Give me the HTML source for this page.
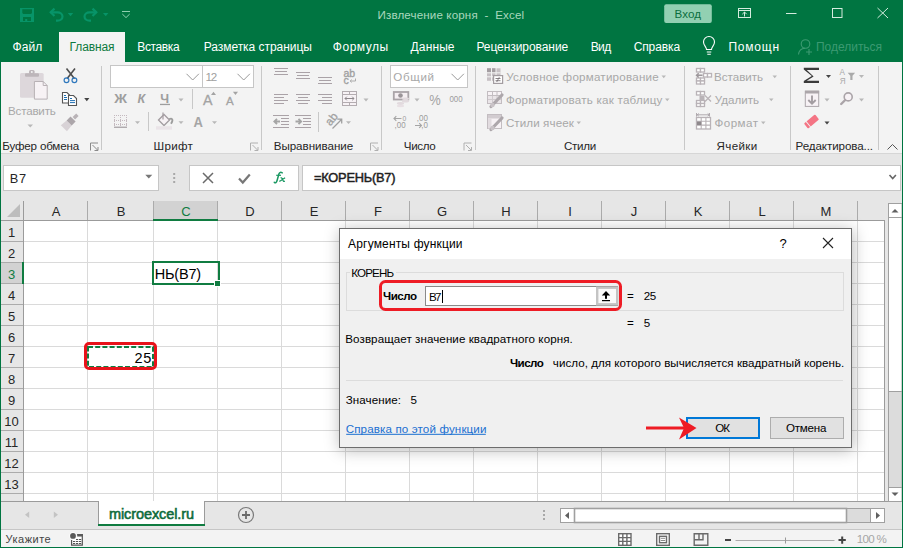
<!DOCTYPE html>
<html><head><meta charset="utf-8">
<style>
*{box-sizing:border-box;margin:0;padding:0}
html,body{width:903px;height:548px;overflow:hidden;background:#f3f3f3;font-family:"Liberation Sans",sans-serif;color:#262626}
.a{position:absolute}
.t{position:absolute;white-space:nowrap;line-height:1}
svg{position:absolute;overflow:visible}
.g{position:absolute;background:#dadada}
</style></head><body>
<div class="a" style="left:0;top:0;width:903px;height:62px;background:#007541"></div>
<div class="a" style="left:59px;top:32px;width:66px;height:30px;background:#f3f3f3"></div>
<div class="a" style="left:0;top:62px;width:903px;height:92px;background:#f3f3f3;border-bottom:1px solid #d6d6d6"></div>
<div class="a" style="left:0;top:154px;width:903px;height:47px;background:#e6e6e6"></div>
<svg style="left:0;top:0" width="903" height="62">
<g fill="#079468">
<path d="M20 8h14v14h-14z M22.3 9.3h9.7v3.8l-1 1h-7.7l-1-1z M23 17h8v4h-8z M25.2 19h2v2h-2z" fill-rule="evenodd"/>
<polygon points="67.8,13 73.2,13 70.5,16.3"/>
<polygon points="103,13 108.4,13 105.7,16.3"/>
</g>
<g fill="none" stroke="#079468" stroke-width="2.2">
<path d="M50.5 12.3h7a5 4.2 0 0 1 0 8.4h-1.5"/>
<path d="M54.5 8.6l-3.8 3.7 3.8 3.7"/>
<path d="M96.5 12.3h-7a5 4.2 0 0 0 0 8.4h1.5"/>
<path d="M92.5 8.6l3.8 3.7-3.8 3.7"/>
</g>
<g fill="none" stroke="#8fcfb0" stroke-width="1">
<path d="M122 11.5h8M122.3 14l3.7 3.6 3.7-3.6"/>
</g>
<!-- window controls -->
<rect x="664.2" y="4.2" width="47.6" height="18.8" rx="2" fill="#92d0b2"/>
<g fill="none" stroke="#d4ebde" stroke-width="1">
<rect x="738.5" y="8.5" width="12" height="9"/>
<path d="M738.5 10.5h12M744.5 16.5v-4.5M742.3 14.2l2.2-2.2 2.2 2.2"/>
<path d="M786 13.5h10.5"/>
<rect x="832.5" y="8.5" width="9.5" height="9"/>
<path d="M877.5 8l10.5 10M888 8l-10.5 10"/>
</g>
</svg>
<!-- tabs -->
<svg style="left:0;top:0" width="903" height="62">
<g fill="none" stroke="#fff" stroke-width="1.1">
<path d="M706.5 49.5c0-2.5-3-4-3-7.5a5.5 5.5 0 0 1 11 0c0 3.5-3 5-3 7.5z"/>
<path d="M706.8 52h4.5M707.3 54.2h3.5"/>
</g>
<g fill="none" stroke="#3c9a72" stroke-width="1.1">
<circle cx="805.5" cy="44" r="4.3"/>
<path d="M798.5 54.5c0.5-4 3-6 6.5-6.2M809 49v6M806 52h6"/>
</g>
</svg>
<svg style="left:0;top:0" width="903" height="160">
<!-- separators -->
<g fill="#c8c8c8">
<rect x="101" y="66" width="1" height="84"/>
<rect x="261" y="66" width="1" height="84"/>
<rect x="381" y="66" width="1" height="84"/>
<rect x="475" y="66" width="1" height="84"/>
<rect x="684" y="66" width="1" height="84"/>
<rect x="790" y="66" width="1" height="84"/>
<rect x="878" y="66" width="1" height="84"/>
<rect x="192" y="89" width="1" height="20"/>
<rect x="148" y="112" width="1" height="19"/>
<rect x="318" y="112" width="1" height="20"/>
</g>
<!-- clipboard -->
<rect x="20" y="73" width="23.7" height="24.7" rx="1.5" fill="#ddd7db"/>
<rect x="25" y="73.3" width="14" height="3.4" rx="1" fill="#bdb6ba"/>
<rect x="29" y="70" width="5.6" height="4" rx="1.5" fill="#bdb6ba"/>
<circle cx="31.8" cy="72" r="1" fill="#f3f3f3"/>
<path d="M34.4 81.5h8.8l4 4v13.6h-12.8z" fill="#f7f2f5" stroke="#b8b1b5" stroke-width="1"/>
<path d="M43.2 81.5v4h4" fill="none" stroke="#b8b1b5" stroke-width="1"/>
<polygon points="27.5,124.5 33,124.5 30.25,127.5" fill="#b8b8b8"/>
<!-- scissors -->
<path d="M66.5 68.5l8 10.2M75 68.5l-8 10.2" stroke="#4e4e4e" stroke-width="1.6" fill="none"/>
<circle cx="66.5" cy="80.3" r="2.4" fill="none" stroke="#2f78bd" stroke-width="1.2"/>
<circle cx="74.4" cy="80.3" r="2.4" fill="none" stroke="#2f78bd" stroke-width="1.2"/>
<!-- copy -->
<path d="M62.5 92.5h4.5l2.5 2.5v8h-7z" fill="#fff" stroke="#555" stroke-width="1.1"/>
<path d="M68.5 95.5h5l3 3v7h-8z" fill="#fff" stroke="#555" stroke-width="1.1"/>
<path d="M64 95.5h2M64 97.5h3M64 99.5h3M70 98.5h2M70 100.6h5M70 102.6h5" stroke="#1f6fb2" stroke-width="1"/>
<polygon points="84.2,98 89.4,98 86.8,101.3" fill="#444"/>
<!-- painter -->
<g transform="translate(71.3 120.8) rotate(-45)">
<polygon points="-10.5,-4.3 -3,-3.6 -3,3.6 -10.5,4.3" fill="#d8d2d6"/>
<rect x="-3" y="-3.6" width="5.5" height="7.2" fill="#aca6aa"/>
<rect x="3.6" y="-1.7" width="5" height="3.4" fill="#b9b3b7"/>
</g>
<!-- launcher icons -->
<g fill="none" stroke="#8a8a8a" stroke-width="1">
<path d="M90.5 150.5v-7.5h7.5M92.5 145l5 5M94.5 150.5h3.5v-3.5"/>
<path d="M370.5 150.5v-7.5h7.5M372.5 145l5 5M374.5 150.5h3.5v-3.5" stroke="#b0b0b0"/>
<path d="M464 150.5v-7.5h7.5M466 145l5 5M468 150.5h3.5v-3.5" stroke="#b0b0b0"/>
<path d="M250.5 150.5v-7.5h7.5M252.5 145l5 5M254.5 150.5h3.5v-3.5" stroke="#b0b0b0"/>
</g>
<!-- font boxes -->
<rect x="110.5" y="65.5" width="92" height="22" fill="#fff" stroke="#c6c6c6"/>
<rect x="202.5" y="65.5" width="51" height="22" fill="#fff" stroke="#c6c6c6"/>
<path d="M186.5 73.8l6.2 6.2 6.2-6.2M237.5 73.8l6.2 6.2 6.2-6.2" fill="none" stroke="#9a9a9a" stroke-width="1"/>
<!-- BIU -->
<text transform="translate(114.3 102.8) scale(1.12 1)" font-family="Liberation Sans" font-weight="bold" font-size="12.6" fill="#9e9e9e">Ж</text>
<text x="137.6" y="102.8" font-family="Liberation Sans" font-weight="bold" font-style="italic" font-size="12.6" fill="#9e9e9e">К</text>
<text x="160.3" y="102.8" font-family="Liberation Sans" font-weight="bold" font-size="12.6" fill="#9e9e9e">Ч</text>
<rect x="160" y="103.8" width="10" height="1.3" fill="#9e9e9e"/>
<polygon points="178.5,98.5 183.5,98.5 181,101.5" fill="#b8b8b8"/>
<text x="203" y="104.8" font-family="Liberation Sans" font-size="14.2" fill="#a3a3a3" stroke="#a3a3a3" stroke-width="0.3">A</text>
<polygon points="211,94.9 216,94.9 213.5,91.8" fill="#a3a3a3"/>
<text x="226" y="104.8" font-family="Liberation Sans" font-size="11.5" fill="#a3a3a3" stroke="#a3a3a3" stroke-width="0.3">A</text>
<polygon points="232.9,91.8 238,91.8 235.45,94.9" fill="#a3a3a3"/>
<!-- borders -->
<g stroke="#c4b9bf" stroke-width="1" stroke-dasharray="1 1" fill="none">
<path d="M114 115.5h13M114 120.5h13M114 124.5h13M114.5 115v11M120.5 115v11M126.5 115v11"/>
</g>
<rect x="114" y="126.6" width="13" height="1.3" fill="#a9a3a7"/>
<polygon points="135,121.3 140,121.3 137.5,124" fill="#b8b8b8"/>
<!-- fill -->
<path d="M158.5 120l5.5-5.5 5.5 5.5-5.5 5.5z" fill="#f7f2f5" stroke="#a39da1" stroke-width="1.3"/>
<path d="M163 112.5v7" stroke="#a39da1" stroke-width="1.2"/>
<path d="M169.2 119.3c2-1.2 3.4-0.6 3.2 1.3-0.2 1.3-0.8 2.3-1.4 3.2" fill="none" stroke="#9d9d9d" stroke-width="1.9"/>
<rect x="156" y="126.2" width="16" height="3.5" fill="#eae4e8"/>
<polygon points="178.5,121.3 183.5,121.3 181,124" fill="#b8b8b8"/>
<text transform="translate(193.6 126.8) scale(0.9 1)" font-family="Liberation Sans" font-weight="bold" font-size="14.5" fill="#a5a5a5">A</text>
<polygon points="212,121.3 217,121.3 214.5,124" fill="#b8b8b8"/>
<!-- align -->
<g stroke="#aaa2a7" stroke-width="1" fill="none">
<path d="M274 68.5h14M275 71.5h12M274 74.5h14"/>
<path d="M296 72.5h14M297 75.5h12M296 78.5h14"/>
<path d="M318 77.5h14M319 80.5h12M318 83.5h14"/>
<path d="M274 94.5h14M274 97.5h10M274 100.5h14M274 103.5h10"/>
<path d="M296 94.5h14M298 97.5h10M296 100.5h14M298 103.5h10"/>
<path d="M318 94.5h14M322 97.5h10M318 100.5h14M322 103.5h10"/>
</g>
<g stroke="#aaa2a7" stroke-width="1" fill="none">
<path d="M273 115.5h16M281 118.5h8M281 121.5h8M281 124.5h8M273 127.5h16"/>
<path d="M295 115.5h16M303 118.5h8M303 121.5h8M303 124.5h8M295 127.5h16"/>
</g>
<path d="M280 121.5h-5.5M277 118.8l-2.7 2.7 2.7 2.7M295.5 121.5h5.5M298.5 118.8l2.7 2.7-2.7 2.7" stroke="#a5a5a5" stroke-width="1.8" fill="none"/>
<text x="343.5" y="76.5" font-family="Liberation Sans" font-size="10.5" fill="#a0a0a0" stroke="#a0a0a0" stroke-width="0.35">ab</text>
<text x="343.5" y="84" font-family="Liberation Sans" font-size="10.5" fill="#a0a0a0" stroke="#a0a0a0" stroke-width="0.35">c</text>
<path d="M355.5 78.5v2.5h-5M351.5 79.5l-1.2 1.5 1.2 1.5" stroke="#a5a5a5" stroke-width="0.9" fill="none"/>
<rect x="342.5" y="91.5" width="14" height="14" fill="#f7f2f5" stroke="#b3acb0" stroke-width="1"/>
<path d="M342.5 94.5h14M342.5 102.5h14M349.5 91.5v3M349.5 102.5v3" stroke="#b3acb0" stroke-width="1"/>
<path d="M345 98.5h9M346.8 96.7l-1.8 1.8 1.8 1.8M352.2 96.7l1.8 1.8-1.8 1.8" stroke="#8e888c" stroke-width="1" fill="none"/>
<polygon points="363.5,98.5 368.5,98.5 366,101.5" fill="#b8b8b8"/>
<text x="0" y="0" font-family="Liberation Sans" font-size="11.5" fill="#a0a0a0" stroke="#a0a0a0" stroke-width="0.3" transform="translate(330.5 126.5) rotate(-52)">ab</text>
<path d="M332.5 128.5l9-9M337.3 119.2h4.4v4.4" stroke="#a0a0a0" stroke-width="1.3" fill="none"/>
<polygon points="346,121.3 351,121.3 348.5,124" fill="#b8b8b8"/>
<!-- number -->
<rect x="390.5" y="65.5" width="77" height="22" fill="#fff" stroke="#c6c6c6"/>
<path d="M451.5 73.8l6.2 6.2 6.2-6.2" fill="none" stroke="#9a9a9a" stroke-width="1"/>
<rect x="393.8" y="92" width="14.5" height="7.5" fill="#f5eff2" stroke="#aaa4a8" stroke-width="1.8"/>
<circle cx="400.5" cy="95.5" r="2.3" fill="#9a9498"/>
<ellipse cx="405.5" cy="98.8" rx="3.6" ry="1.4" fill="#e2dade"/>
<ellipse cx="405.5" cy="101.3" rx="3.6" ry="1.2" fill="#e2dade"/>
<ellipse cx="400.5" cy="103.5" rx="3.6" ry="1.4" fill="#e2dade"/>
<ellipse cx="400.5" cy="106" rx="3.6" ry="1.2" fill="#e8e0e4"/>
<polygon points="414.5,98.5 419.5,98.5 417,101.5" fill="#b8b8b8"/>
<text transform="translate(429.3 104.8) scale(0.92 1)" font-family="Liberation Sans" font-size="14" fill="#a3a3a3">%</text>
<text transform="translate(449.4 101.7) scale(0.9 1)" font-family="Liberation Sans" font-size="8.8" fill="#9c9c9c">000</text>
<text transform="translate(402.4 120.6) scale(0.9 1)" font-family="Liberation Sans" font-size="7.6" fill="#9c9c9c">0</text>
<text transform="translate(394.6 128.2) scale(0.95 1)" font-family="Liberation Sans" font-size="8.4" fill="#9c9c9c">,00</text>
<path d="M401.5 118.5h-7.5M396.3 116.2l-2.3 2.3 2.3 2.3" stroke="#a5a5a5" stroke-width="1.1" fill="none"/>
<text transform="translate(416.8 121) scale(0.95 1)" font-family="Liberation Sans" font-size="8.4" fill="#9c9c9c">,00</text>
<text transform="translate(421.3 128.2) scale(0.95 1)" font-family="Liberation Sans" font-size="8.4" fill="#9c9c9c">,0</text>
<path d="M415 125.5h6.5M419.2 123.2l2.3 2.3-2.3 2.3" stroke="#a5a5a5" stroke-width="1.1" fill="none"/>
<!-- styles -->
<rect x="487" y="68.3" width="13.5" height="12.5" fill="#c6c0c4"/>
<rect x="487" y="68.3" width="9" height="4" fill="#a39da1"/>
<path d="M491.5 68v13M496 68v13M487 72.8h13.5M487 76.8h13.5" stroke="#f3f3f3" stroke-width="1"/>
<rect x="493.6" y="75.6" width="9" height="7.8" fill="#fff" stroke="#a39da1" stroke-width="1.2"/>
<path d="M495.5 78.5h5M495.5 80.7h5M499.3 77.2l-2.6 4.8" stroke="#7a7478" stroke-width="0.9"/>
<rect x="487.5" y="91.5" width="14" height="12" fill="#f7f2f5" stroke="#c3bdc1" stroke-width="1"/>
<path d="M487.5 95.5h14M487.5 99.5h14M492.5 91.5v12M497 91.5v12" stroke="#c3bdc1" stroke-width="1"/>
<rect x="488" y="96" width="13" height="7" fill="#ddd7db" opacity="0.5"/>
<path d="M491 106.5l11-11.5" stroke="#ada7ab" stroke-width="3.2" stroke-linecap="round"/>
<circle cx="492.5" cy="105" r="2.2" fill="#c9c3c7"/>
<rect x="487.5" y="114.5" width="14" height="14" fill="#f7f2f5" stroke="#c3bdc1" stroke-width="1"/>
<rect x="488" y="115" width="13" height="3.5" fill="#d2ccd0"/>
<rect x="488" y="118.5" width="3.5" height="10" fill="#e2dce0"/>
<path d="M491 129.5l11-11.5" stroke="#ada7ab" stroke-width="3.2" stroke-linecap="round"/>
<circle cx="492.5" cy="128" r="2.2" fill="#c9c3c7"/>
<polygon points="661.5,75.5 666,75.5 663.75,78.3" fill="#b8b8b8"/>
<polygon points="665,98.5 669.5,98.5 667.25,101.3" fill="#b8b8b8"/>
<polygon points="576.5,121.5 581,121.5 578.75,124.3" fill="#b8b8b8"/>
<!-- cells -->
<g stroke="#b9b3b7" stroke-width="1.3" fill="#fff">
<rect x="696.5" y="68.5" width="4" height="3.5"/><rect x="700.5" y="68.5" width="4" height="3.5"/>
<rect x="703.5" y="73.5" width="4" height="3.5"/><rect x="707.5" y="73.5" width="4" height="3.5"/>
<rect x="696.5" y="78" width="4" height="3"/><rect x="700.5" y="78" width="4" height="3"/>
<rect x="696.5" y="81" width="4" height="3"/><rect x="700.5" y="81" width="4" height="3"/>
<rect x="696.5" y="91.5" width="4" height="3.5"/><rect x="700.5" y="91.5" width="4" height="3.5"/>
<rect x="696.5" y="100.5" width="4" height="3"/><rect x="700.5" y="100.5" width="4" height="3"/>
<rect x="696.5" y="103.5" width="4" height="3"/><rect x="700.5" y="103.5" width="4" height="3"/>
<rect x="696.5" y="117.5" width="14" height="11.5"/>
</g>
<path d="M702.5 75.3h-6M698.7 73.2l-2.2 2.1 2.2 2.1" stroke="#9d979b" stroke-width="1.4" fill="none"/>
<rect x="699.5" y="96" width="5" height="4" fill="#b9b3b7"/>
<path d="M705 95.5l6 6M711 95.5l-6 6" stroke="#b9b3b7" stroke-width="1.3"/>
<path d="M696.5 121.3h14M696.5 125.1h14M701.2 117.5v11.5M705.9 117.5v11.5" stroke="#b9b3b7" stroke-width="1.1"/>
<rect x="697" y="121.5" width="4.3" height="3.6" fill="#8e888c"/>
<path d="M697 114.8h12M696.5 113v3.6M709.5 113v3.6M698.8 113.5l-1.6 1.3 1.6 1.3M707.7 113.5l1.6 1.3-1.6 1.3" stroke="#a9a3a7" stroke-width="0.9" fill="none"/>
<polygon points="772.5,75.5 777,75.5 774.75,78.3" fill="#b8b8b8"/>
<polygon points="769,98.5 773.5,98.5 771.25,101.3" fill="#b8b8b8"/>
<polygon points="761,121.5 765.5,121.5 763.25,124.3" fill="#b8b8b8"/>
<!-- editing -->
<path d="M803.8 67.8h15.2v2.1h-12.2l6.8 6.5-6.8 4.4h12.2v2.1h-15.2v-1.8l8-5-8-6.5z" fill="#3a3a3a"/>
<polygon points="826,75 831,75 828.5,78" fill="#444"/>
<text transform="translate(839.5 74.6) scale(0.95 1)" font-family="Liberation Sans" font-size="8.6" fill="#a9a9a9">А</text>
<text transform="translate(839.8 83.9) scale(0.95 1)" font-family="Liberation Sans" font-size="8.6" fill="#a9a9a9">Я</text>
<path d="M847.7 72.7h7.4l-2.6 3v4.2h-2.2v-4.2z" fill="#a9a9a9"/>
<polygon points="859,75 864,75 861.5,78" fill="#b8b8b8"/>
<rect x="805.3" y="91.2" width="13.4" height="15.2" fill="#f7f2f5" stroke="#aca6aa" stroke-width="1"/>
<rect x="805" y="90.7" width="14.1" height="2.8" fill="#aca6aa"/>
<path d="M812 95.5v8M808.3 100l3.7 3.7 3.7-3.7" stroke="#a39da1" stroke-width="1.9" fill="none"/>
<polygon points="824.5,98.5 829.5,98.5 827,101.5" fill="#b8b8b8"/>
<circle cx="848.2" cy="96.9" r="4" fill="#f7f2f5" stroke="#aaa4a8" stroke-width="1.6"/>
<path d="M845.2 100l-4 4" stroke="#aaa4a8" stroke-width="2.4" stroke-linecap="round"/>
<polygon points="859,98.5 864,98.5 861.5,101.5" fill="#b8b8b8"/>
<g transform="translate(811.5 121.5) rotate(-40)">
<rect x="-7.2" y="-3.3" width="14.4" height="6.6" rx="1" fill="#f47484"/>
<rect x="-4.6" y="-3.6" width="0.9" height="7.2" fill="#f3f3f3"/>
</g>
<polygon points="824.5,121.5 829.5,121.5 827,124.5" fill="#444"/>
<path d="M887.5 149.5l5-5 5 5" fill="none" stroke="#555" stroke-width="1"/>
</svg>
<div class="a" style="left:3px;top:165px;width:156px;height:26px;background:#fff;border:1px solid #c6c6c6"></div>
<div class="a" style="left:189px;top:165px;width:110px;height:26px;background:#fff;border:1px solid #c6c6c6"></div>
<div class="a" style="left:302px;top:165px;width:599px;height:26px;background:#fff;border:1px solid #c6c6c6"></div>
<svg style="left:0;top:0" width="903" height="200">
<polygon points="145.3,174.8 152.3,174.8 148.8,178.6" fill="#777"/>
<g fill="#a8a8a8"><rect x="173.2" y="173" width="2" height="2"/><rect x="173.2" y="177" width="2" height="2"/><rect x="173.2" y="181" width="2" height="2"/></g>
<path d="M203 173l10 10M213 173l-10 10" stroke="#6a6a6a" stroke-width="1.5"/>
<path d="M239 178.5l3.8 4 7-8" stroke="#777" stroke-width="2.2" fill="none"/>
<path d="M274.3 182.3c1.2 0.9 2.2 0.2 2.7-1.5l2-7c0.5-1.6 1.8-1.8 3.3-1" stroke="#1a9862" stroke-width="1.5" fill="none" stroke-linecap="round"/>
<path d="M276.2 175.3h4.8" stroke="#1a9862" stroke-width="1.2"/>
<path d="M280.6 177.6c1 0 1.5 0.6 1.9 1.6l0.8 1.6c0.3 0.5 1 0.6 1.6 0.4M279.3 181.3c1.8-0.6 3.6-2.4 5.8-3.6" stroke="#1a9862" stroke-width="1.3" fill="none"/>
<path d="M889.5 175l3.2 3.5 3.2-3.5" stroke="#666" stroke-width="1.6" fill="none"/>
</svg>
<div class="a" style="left:0;top:201px;width:903px;height:301px;background:#e6e6e6"></div>
<div class="a" style="left:1px;top:201px;width:884px;height:20px;background:#e6e6e6"></div>
<div class="a" style="left:1px;top:201px;width:23px;height:300px;background:#e6e6e6"></div>
<div class="a" style="left:24px;top:221px;width:860px;height:280px;background:#fff"></div>
<div class="a" style="left:154px;top:201px;width:63px;height:18px;background:#d2d2d2"></div>
<div class="a" style="left:153px;top:219px;width:65px;height:2px;background:#107c41"></div>
<div class="a" style="left:1px;top:263px;width:21px;height:20px;background:#d2d2d2"></div>
<div class="g" style="left:87px;top:221px;width:1px;height:280px"></div>
<div class="g" style="left:153px;top:221px;width:1px;height:280px"></div>
<div class="g" style="left:217px;top:221px;width:1px;height:280px"></div>
<div class="g" style="left:281px;top:221px;width:1px;height:280px"></div>
<div class="g" style="left:345px;top:221px;width:1px;height:280px"></div>
<div class="g" style="left:409px;top:221px;width:1px;height:280px"></div>
<div class="g" style="left:473px;top:221px;width:1px;height:280px"></div>
<div class="g" style="left:537px;top:221px;width:1px;height:280px"></div>
<div class="g" style="left:601px;top:221px;width:1px;height:280px"></div>
<div class="g" style="left:665px;top:221px;width:1px;height:280px"></div>
<div class="g" style="left:729px;top:221px;width:1px;height:280px"></div>
<div class="g" style="left:793px;top:221px;width:1px;height:280px"></div>
<div class="g" style="left:857px;top:221px;width:1px;height:280px"></div>
<div class="g" style="left:24px;top:241px;width:860px;height:1px"></div>
<div class="g" style="left:24px;top:262px;width:860px;height:1px"></div>
<div class="g" style="left:24px;top:283px;width:860px;height:1px"></div>
<div class="g" style="left:24px;top:304px;width:860px;height:1px"></div>
<div class="g" style="left:24px;top:325px;width:860px;height:1px"></div>
<div class="g" style="left:24px;top:346px;width:860px;height:1px"></div>
<div class="g" style="left:24px;top:367px;width:860px;height:1px"></div>
<div class="g" style="left:24px;top:388px;width:860px;height:1px"></div>
<div class="g" style="left:24px;top:409px;width:860px;height:1px"></div>
<div class="g" style="left:24px;top:430px;width:860px;height:1px"></div>
<div class="g" style="left:24px;top:451px;width:860px;height:1px"></div>
<div class="g" style="left:24px;top:472px;width:860px;height:1px"></div>
<div class="g" style="left:24px;top:493px;width:860px;height:1px"></div>
<div class="a" style="left:87px;top:201px;width:1px;height:19px;background:#ababab"></div>
<div class="a" style="left:153px;top:201px;width:1px;height:19px;background:#ababab"></div>
<div class="a" style="left:217px;top:201px;width:1px;height:19px;background:#ababab"></div>
<div class="a" style="left:281px;top:201px;width:1px;height:19px;background:#ababab"></div>
<div class="a" style="left:345px;top:201px;width:1px;height:19px;background:#ababab"></div>
<div class="a" style="left:409px;top:201px;width:1px;height:19px;background:#ababab"></div>
<div class="a" style="left:473px;top:201px;width:1px;height:19px;background:#ababab"></div>
<div class="a" style="left:537px;top:201px;width:1px;height:19px;background:#ababab"></div>
<div class="a" style="left:601px;top:201px;width:1px;height:19px;background:#ababab"></div>
<div class="a" style="left:665px;top:201px;width:1px;height:19px;background:#ababab"></div>
<div class="a" style="left:729px;top:201px;width:1px;height:19px;background:#ababab"></div>
<div class="a" style="left:793px;top:201px;width:1px;height:19px;background:#ababab"></div>
<div class="a" style="left:857px;top:201px;width:1px;height:19px;background:#ababab"></div>
<div class="a" style="left:1px;top:241px;width:22px;height:1px;background:#ababab"></div>
<div class="a" style="left:1px;top:262px;width:22px;height:1px;background:#ababab"></div>
<div class="a" style="left:1px;top:283px;width:22px;height:1px;background:#ababab"></div>
<div class="a" style="left:1px;top:304px;width:22px;height:1px;background:#ababab"></div>
<div class="a" style="left:1px;top:325px;width:22px;height:1px;background:#ababab"></div>
<div class="a" style="left:1px;top:346px;width:22px;height:1px;background:#ababab"></div>
<div class="a" style="left:1px;top:367px;width:22px;height:1px;background:#ababab"></div>
<div class="a" style="left:1px;top:388px;width:22px;height:1px;background:#ababab"></div>
<div class="a" style="left:1px;top:409px;width:22px;height:1px;background:#ababab"></div>
<div class="a" style="left:1px;top:430px;width:22px;height:1px;background:#ababab"></div>
<div class="a" style="left:1px;top:451px;width:22px;height:1px;background:#ababab"></div>
<div class="a" style="left:1px;top:472px;width:22px;height:1px;background:#ababab"></div>
<div class="a" style="left:1px;top:493px;width:22px;height:1px;background:#ababab"></div>
<div class="a" style="left:1px;top:220px;width:884px;height:1px;background:#9b9b9b"></div>
<div class="a" style="left:23px;top:201px;width:1px;height:300px;background:#9b9b9b"></div>
<div class="a" style="left:884px;top:220px;width:1px;height:282px;background:#9b9b9b"></div>
<div class="a" style="left:153px;top:219px;width:65px;height:2px;background:#107c41"></div>
<div class="a" style="left:22px;top:262px;width:2px;height:22px;background:#107c41"></div>
<svg style="left:0;top:0" width="903" height="548"><polygon points="7,217 20,217 20,204" fill="#bdbdbd"/></svg>
<div class="t" style="left:23px;width:64px;text-align:center;top:205px;padding-left:2px;font-size:13px;color:#262626">A</div>
<div class="t" style="left:87px;width:66px;text-align:center;top:205px;padding-left:2px;font-size:13px;color:#262626">B</div>
<div class="t" style="left:153px;width:64px;text-align:center;top:205px;padding-left:2px;font-size:13px;color:#107c41">C</div>
<div class="t" style="left:217px;width:64px;text-align:center;top:205px;padding-left:2px;font-size:13px;color:#262626">D</div>
<div class="t" style="left:281px;width:64px;text-align:center;top:205px;padding-left:2px;font-size:13px;color:#262626">E</div>
<div class="t" style="left:345px;width:64px;text-align:center;top:205px;padding-left:2px;font-size:13px;color:#262626">F</div>
<div class="t" style="left:409px;width:64px;text-align:center;top:205px;padding-left:2px;font-size:13px;color:#262626">G</div>
<div class="t" style="left:473px;width:64px;text-align:center;top:205px;padding-left:2px;font-size:13px;color:#262626">H</div>
<div class="t" style="left:537px;width:64px;text-align:center;top:205px;padding-left:2px;font-size:13px;color:#262626">I</div>
<div class="t" style="left:601px;width:64px;text-align:center;top:205px;padding-left:2px;font-size:13px;color:#262626">J</div>
<div class="t" style="left:665px;width:64px;text-align:center;top:205px;padding-left:2px;font-size:13px;color:#262626">K</div>
<div class="t" style="left:729px;width:64px;text-align:center;top:205px;padding-left:2px;font-size:13px;color:#262626">L</div>
<div class="t" style="left:793px;width:64px;text-align:center;top:205px;padding-left:2px;font-size:13px;color:#262626">M</div>
<div class="t" style="left:1px;width:22px;text-align:center;top:226px;padding-right:1px;font-size:13px;color:#262626">1</div>
<div class="t" style="left:1px;width:22px;text-align:center;top:247px;padding-right:1px;font-size:13px;color:#262626">2</div>
<div class="t" style="left:1px;width:22px;text-align:center;top:268px;padding-right:1px;font-size:13px;color:#107c41">3</div>
<div class="t" style="left:1px;width:22px;text-align:center;top:289px;padding-right:1px;font-size:13px;color:#262626">4</div>
<div class="t" style="left:1px;width:22px;text-align:center;top:310px;padding-right:1px;font-size:13px;color:#262626">5</div>
<div class="t" style="left:1px;width:22px;text-align:center;top:331px;padding-right:1px;font-size:13px;color:#262626">6</div>
<div class="t" style="left:1px;width:22px;text-align:center;top:352px;padding-right:1px;font-size:13px;color:#262626">7</div>
<div class="t" style="left:1px;width:22px;text-align:center;top:373px;padding-right:1px;font-size:13px;color:#262626">8</div>
<div class="t" style="left:1px;width:22px;text-align:center;top:394px;padding-right:1px;font-size:13px;color:#262626">9</div>
<div class="t" style="left:1px;width:22px;text-align:center;top:415px;padding-right:1px;font-size:13px;color:#262626">10</div>
<div class="t" style="left:1px;width:22px;text-align:center;top:436px;padding-right:1px;font-size:13px;color:#262626">11</div>
<div class="t" style="left:1px;width:22px;text-align:center;top:457px;padding-right:1px;font-size:13px;color:#262626">12</div>
<div class="t" style="left:1px;width:22px;text-align:center;top:478px;padding-right:1px;font-size:13px;color:#262626">13</div>
<div class="a" style="left:152px;top:261px;width:68px;height:24px;border:2px solid #107c41"></div>
<div class="a" style="left:214px;top:280px;width:7px;height:7px;background:#fff"></div>
<div class="a" style="left:215px;top:281px;width:5px;height:5px;background:#107c41"></div>
<svg style="left:0;top:0" width="903" height="548"><rect x="88" y="347" width="65" height="20" fill="none" stroke="#107c41" stroke-width="2" stroke-dasharray="5 2.2"/></svg>
<div class="a" style="left:84px;top:342px;width:73px;height:28px;border:3px solid #e8131b;border-radius:5px"></div>
<div class="a" style="left:0;top:501px;width:903px;height:29px;background:#e6e6e6;border-top:1px solid #9b9b9b;border-bottom:1px solid #c6c6c6"></div>
<div class="a" style="left:98px;top:501px;width:107px;height:25px;background:#fff;border-left:1px solid #9b9b9b;border-right:1px solid #9b9b9b"></div>
<div class="a" style="left:98px;top:524px;width:107px;height:2px;background:#107c41"></div>
<div class="a" style="left:0;top:530px;width:903px;height:18px;background:#f3f3f3"></div>
<svg style="left:0;top:0" width="903" height="548">
<polygon points="29.2,511.4 29.2,518 25,514.7" fill="#c3c3c3"/>
<polygon points="53.8,511.4 53.8,518 58,514.7" fill="#c3c3c3"/>
<circle cx="246" cy="515" r="7.5" fill="none" stroke="#7a7a7a" stroke-width="1.2"/>
<path d="M242 515h8M246 511v8" stroke="#6a6a6a" stroke-width="1.8"/>
<g fill="#a8a8a8"><rect x="543" y="510" width="2" height="2"/><rect x="543" y="514" width="2" height="2"/><rect x="543" y="518" width="2" height="2"/></g>
<!-- hscroll -->
<rect x="560.5" y="508.5" width="324" height="14" fill="#dcdcdc" stroke="#a0a0a0"/>
<rect x="560.5" y="508.5" width="14" height="14" fill="#fff" stroke="#a0a0a0"/>
<rect x="574.5" y="508.5" width="272" height="14" fill="#fff" stroke="#a0a0a0" stroke-width="1.6"/>
<rect x="870.5" y="508.5" width="14" height="14" fill="#fff" stroke="#a0a0a0"/>
<polygon points="569,512 569,519 565,515.5" fill="#606060"/>
<polygon points="876,512 876,519 880,515.5" fill="#606060"/>
<!-- vscroll -->
<rect x="888.5" y="203.5" width="13.5" height="298" fill="#dcdcdc" stroke="#a0a0a0"/>
<rect x="888.5" y="203.5" width="13.5" height="14" fill="#fff" stroke="#a0a0a0"/>
<rect x="888.5" y="217.5" width="13.5" height="174" fill="#fff" stroke="#a0a0a0"/>
<rect x="888.5" y="487.5" width="13.5" height="14" fill="#fff" stroke="#a0a0a0"/>
<polygon points="891.5,212.5 898.5,212.5 895,209" fill="#606060"/>
<polygon points="891.5,492.5 898.5,492.5 895,496" fill="#606060"/>
<!-- status icons -->
<rect x="72.2" y="536.5" width="10" height="8.5" fill="#fff"/>
<circle cx="73" cy="535.9" r="3.6" fill="#fff"/>
<circle cx="73" cy="535.9" r="2.9" fill="#5a5a5a"/>
<path d="M71.6 540v5.2h10.7v-10.7h-5" stroke="#555" stroke-width="1.2" fill="none"/>
<rect x="77.2" y="534" width="5.7" height="2.5" fill="#5a5a5a"/>
<g fill="#555">
<rect x="76" y="539" width="2.2" height="1"/><rect x="79" y="539" width="2.2" height="1"/>
<rect x="73" y="541" width="2.2" height="1"/><rect x="76" y="541" width="2.2" height="1"/><rect x="79" y="541" width="2.2" height="1"/>
<rect x="73" y="543" width="2.2" height="1"/><rect x="76" y="543" width="2.2" height="1"/><rect x="79" y="543" width="2.2" height="1"/>
</g>
<g fill="none" stroke="#6a6a6a" stroke-width="1.4">
<rect x="618.7" y="533.7" width="12.3" height="11.6" fill="#fff"/>
<path d="M618.7 537.6h12.3M618.7 541.4h12.3M622.8 533.7v11.6M626.9 533.7v11.6"/>
<rect x="656.7" y="533.7" width="12.6" height="11.6" fill="#fff"/>
<rect x="659.5" y="536.3" width="7" height="6.4"/>
<path d="M660.8 538.3h4.4M660.8 540.5h4.4" stroke-width="0.8"/>
<path d="M694.2 545.3v-11.6h13.6v11.6zM699 533.7v6h4v-6M694.2 539.7h4.8"/>
</g>
<path d="M725 540h6" stroke="#444" stroke-width="2"/>
<path d="M735.5 540.5h99" stroke="#aaa" stroke-width="1"/>
<path d="M785.5 537.5v6" stroke="#999" stroke-width="1"/>
<path d="M838.5 540h7.3M842.2 536.4v7.3" stroke="#444" stroke-width="2"/>
</svg>
<div class="a" style="left:339px;top:228px;width:513px;height:220px;background:#f0f0f0;border:1px solid #6d6d6d;box-shadow:1px 2px 15px rgba(0,0,0,0.28)"></div>
<div class="a" style="left:340px;top:229px;width:511px;height:30px;background:#fff"></div>
<svg style="left:0;top:0" width="903" height="548">
<path d="M823 238l10 10M833 238l-10 10" stroke="#222" stroke-width="1.1"/>
<!-- group box -->
<rect x="346.5" y="272.5" width="497" height="38" fill="none" stroke="#dcdcdc" stroke-width="1"/>
<rect x="350" y="266" width="46" height="12" fill="#f0f0f0"/>
<!-- input -->
<rect x="425.5" y="286.5" width="192" height="19" fill="#fff" stroke="#8a8a8a" stroke-width="1"/>
<rect x="597.2" y="287.7" width="20" height="16.6" fill="#fafafa" stroke="#c4c4c4" stroke-width="2.4"/>
<polygon points="601.8,295.6 606,291 610.2,295.6" fill="#000"/><rect x="605" y="295" width="2" height="3.8" fill="#000"/>
<rect x="602" y="300" width="8" height="1.2" fill="#000"/>
<rect x="380.5" y="281.5" width="240" height="28" rx="5" fill="none" stroke="#ee1c25" stroke-width="3"/>
<rect x="442" y="290" width="1" height="13" fill="#000"/>
<!-- separator -->
<rect x="346" y="380" width="497" height="1" fill="#dcdcdc"/>
<!-- buttons -->
<rect x="687" y="418" width="72" height="20" fill="#e1e1e1" stroke="#0078d7" stroke-width="2"/>
<rect x="770.5" y="417.5" width="73" height="21" fill="#e1e1e1" stroke="#adadad" stroke-width="1"/>
<!-- red arrow -->
<path d="M646 428h40" stroke="#ee1c25" stroke-width="3.2"/>
<polygon points="679,417.5 696.5,428 679,439.5 684,428" fill="#ee1c25"/>
</svg>
<svg style="left:0;top:0" width="903" height="548">
<text x="377.50" y="18.6" style="font-family:&quot;Liberation Sans&quot;;font-size:11.6px;fill:#a9d8be;letter-spacing:0.132px;white-space:pre">Извлечение корня  -  Excel</text>
<text x="674.50" y="17.7" style="font-family:&quot;Liberation Sans&quot;;font-size:11.6px;fill:#0a6e3e;letter-spacing:0.083px;white-space:pre">Вход</text>
<text x="12.55" y="50.8" style="font-family:&quot;Liberation Sans&quot;;font-size:12px;fill:#ffffff;letter-spacing:0.067px;white-space:pre">Файл</text>
<text x="69.60" y="50.8" style="font-family:&quot;Liberation Sans&quot;;font-size:12px;fill:#0e7a40;letter-spacing:-0.133px;white-space:pre">Главная</text>
<text x="137.30" y="50.8" style="font-family:&quot;Liberation Sans&quot;;font-size:12px;fill:#ffffff;letter-spacing:-0.375px;white-space:pre">Вставка</text>
<text x="203.70" y="50.8" style="font-family:&quot;Liberation Sans&quot;;font-size:12px;fill:#ffffff;letter-spacing:-0.044px;white-space:pre">Разметка страницы</text>
<text x="332.85" y="50.8" style="font-family:&quot;Liberation Sans&quot;;font-size:12px;fill:#ffffff;letter-spacing:0.508px;white-space:pre">Формулы</text>
<text x="410.60" y="50.8" style="font-family:&quot;Liberation Sans&quot;;font-size:12px;fill:#ffffff;letter-spacing:0.120px;white-space:pre">Данные</text>
<text x="476.40" y="50.8" style="font-family:&quot;Liberation Sans&quot;;font-size:12px;fill:#ffffff;letter-spacing:-0.065px;white-space:pre">Рецензирование</text>
<text x="590.70" y="50.8" style="font-family:&quot;Liberation Sans&quot;;font-size:12px;fill:#ffffff;letter-spacing:-0.600px;white-space:pre">Вид</text>
<text x="633.70" y="50.8" style="font-family:&quot;Liberation Sans&quot;;font-size:12px;fill:#ffffff;letter-spacing:-0.117px;white-space:pre">Справка</text>
<text x="728.40" y="50.8" style="font-family:&quot;Liberation Sans&quot;;font-size:12px;fill:#ffffff;letter-spacing:0.780px;white-space:pre">Помощн</text>
<text x="816.00" y="50.8" style="font-family:&quot;Liberation Sans&quot;;font-size:12px;fill:#3c9a72;letter-spacing:-0.022px;white-space:pre">Поделиться</text>
<text x="2.30" y="150" style="font-family:&quot;Liberation Sans&quot;;font-size:11.6px;fill:#262626;letter-spacing:-0.182px;white-space:pre">Буфер обмена</text>
<text x="153.60" y="150" style="font-family:&quot;Liberation Sans&quot;;font-size:11.6px;fill:#262626;letter-spacing:0.275px;white-space:pre">Шрифт</text>
<text x="273.70" y="150" style="font-family:&quot;Liberation Sans&quot;;font-size:11.6px;fill:#262626;letter-spacing:-0.032px;white-space:pre">Выравнивание</text>
<text x="403.75" y="150" style="font-family:&quot;Liberation Sans&quot;;font-size:11.6px;fill:#262626;letter-spacing:-0.338px;white-space:pre">Число</text>
<text x="563.90" y="150" style="font-family:&quot;Liberation Sans&quot;;font-size:11.6px;fill:#262626;letter-spacing:-0.287px;white-space:pre">Стили</text>
<text x="716.50" y="150" style="font-family:&quot;Liberation Sans&quot;;font-size:11.6px;fill:#262626;letter-spacing:0.370px;white-space:pre">Ячейки</text>
<text x="795.60" y="150" style="font-family:&quot;Liberation Sans&quot;;font-size:11.6px;fill:#262626;letter-spacing:-0.096px;white-space:pre">Редактирова...</text>
<text x="8.00" y="115" style="font-family:&quot;Liberation Sans&quot;;font-size:11.6px;fill:#a8a8a8;letter-spacing:-0.193px;white-space:pre">Вставить</text>
<text x="506.15" y="81.1" style="font-family:&quot;Liberation Sans&quot;;font-size:11.6px;fill:#a8a8a8;letter-spacing:0.230px;white-space:pre">Условное форматирование</text>
<text x="505.90" y="104" style="font-family:&quot;Liberation Sans&quot;;font-size:11.6px;fill:#a8a8a8;letter-spacing:0.233px;white-space:pre">Форматировать как таблицу</text>
<text x="505.90" y="127" style="font-family:&quot;Liberation Sans&quot;;font-size:11.6px;fill:#a8a8a8;letter-spacing:0.100px;white-space:pre">Стили ячеек</text>
<text x="714.00" y="81.3" style="font-family:&quot;Liberation Sans&quot;;font-size:11.6px;fill:#a8a8a8;letter-spacing:-0.007px;white-space:pre">Вставить</text>
<text x="714.75" y="104" style="font-family:&quot;Liberation Sans&quot;;font-size:11.6px;fill:#a8a8a8;white-space:pre">Удалить</text>
<text x="714.50" y="126.7" style="font-family:&quot;Liberation Sans&quot;;font-size:11.6px;fill:#a8a8a8;letter-spacing:0.460px;white-space:pre">Формат</text>
<text x="205.55" y="80.6" style="font-family:&quot;Liberation Sans&quot;;font-size:11.6px;fill:#a0a0a0;letter-spacing:-1.300px;white-space:pre">12</text>
<text x="393.30" y="80.6" style="font-family:&quot;Liberation Sans&quot;;font-size:11.6px;fill:#a8a8a8;letter-spacing:0.650px;white-space:pre">Общий</text>
<text x="9.70" y="182.8" style="font-family:&quot;Liberation Sans&quot;;font-size:12.8px;fill:#262626;letter-spacing:0.800px;white-space:pre">B7</text>
<text x="314.00" y="182.2" style="font-family:&quot;Liberation Sans&quot;;font-size:12.8px;fill:#1f1f1f;letter-spacing:-0.210px;stroke:#1f1f1f;stroke-width:0.5px;white-space:pre">=КОРЕНЬ(B7)</text>
<text x="154.75" y="279" style="font-family:&quot;Liberation Sans&quot;;font-size:14.5px;fill:#000000;letter-spacing:-0.190px;white-space:pre">НЬ(B7)</text>
<text x="134.55" y="363" style="font-family:&quot;Liberation Sans&quot;;font-size:14.5px;fill:#000000;letter-spacing:0.750px;white-space:pre">25</text>
<text x="109.00" y="519" style="font-family:&quot;Liberation Sans&quot;;font-size:14.5px;fill:#0e6b3b;letter-spacing:-0.104px;stroke:#0e6b3b;stroke-width:0.55px;white-space:pre">microexcel.ru</text>
<text x="5.55" y="542.5" style="font-family:&quot;Liberation Sans&quot;;font-size:11px;fill:#444444;letter-spacing:0.483px;white-space:pre">Укажите</text>
<text x="856.85" y="542.9" style="font-family:&quot;Liberation Sans&quot;;font-size:11.6px;fill:#a6a6a6;letter-spacing:-0.738px;white-space:pre">100 %</text>
<text x="348.10" y="247.8" style="font-family:&quot;Liberation Sans&quot;;font-size:12px;fill:#000000;letter-spacing:0.162px;white-space:pre">Аргументы функции</text>
<text x="351.30" y="276.9" style="font-family:&quot;Liberation Sans&quot;;font-size:11.6px;fill:#000000;letter-spacing:-0.860px;white-space:pre">КОРЕНЬ</text>
<text x="383.00" y="299.6" style="font-family:&quot;Liberation Sans&quot;;font-size:11.6px;fill:#000000;font-weight:bold;letter-spacing:-0.487px;white-space:pre">Число</text>
<text x="429.00" y="301.2" style="font-family:&quot;Liberation Sans&quot;;font-size:11.6px;fill:#000000;letter-spacing:-1.750px;white-space:pre">B7</text>
<text x="627.10" y="300.1" style="font-family:&quot;Liberation Sans&quot;;font-size:11.6px;fill:#000000;white-space:pre">=</text>
<text x="643.70" y="300.1" style="font-family:&quot;Liberation Sans&quot;;font-size:11.6px;fill:#000000;letter-spacing:-0.400px;white-space:pre">25</text>
<text x="627.10" y="327.2" style="font-family:&quot;Liberation Sans&quot;;font-size:11.6px;fill:#000000;white-space:pre">=</text>
<text x="643.70" y="327.2" style="font-family:&quot;Liberation Sans&quot;;font-size:11.6px;fill:#000000;white-space:pre">5</text>
<text x="345.30" y="343.1" style="font-family:&quot;Liberation Sans&quot;;font-size:11.6px;fill:#000000;letter-spacing:0.074px;white-space:pre">Возвращает значение квадратного корня.</text>
<text x="510.00" y="366.8" style="font-family:&quot;Liberation Sans&quot;;font-size:11.6px;fill:#000000;font-weight:bold;letter-spacing:-0.537px;white-space:pre">Число</text>
<text x="552.85" y="366.8" style="font-family:&quot;Liberation Sans&quot;;font-size:11.6px;fill:#000000;letter-spacing:0.030px;white-space:pre">число, для которого вычисляется квадратный корень.</text>
<text x="345.70" y="404" style="font-family:&quot;Liberation Sans&quot;;font-size:11.6px;fill:#000000;letter-spacing:0.094px;white-space:pre">Значение:</text>
<text x="410.40" y="404" style="font-family:&quot;Liberation Sans&quot;;font-size:11.6px;fill:#000000;white-space:pre">5</text>
<text x="345.70" y="433.2" style="font-family:&quot;Liberation Sans&quot;;font-size:11.6px;fill:#1a6fd0;letter-spacing:0.130px;white-space:pre">Справка по этой функции</text>
<rect x="346.2" y="433.8" width="139.60000000000002" height="1" fill="#1a6fd0"/>
<text x="715.30" y="432.2" style="font-family:&quot;Liberation Sans&quot;;font-size:11.6px;fill:#000000;letter-spacing:-1.150px;white-space:pre">ОК</text>
<text x="785.90" y="432.2" style="font-family:&quot;Liberation Sans&quot;;font-size:11.6px;fill:#000000;letter-spacing:-0.230px;white-space:pre">Отмена</text>
<text x="779.50" y="248.4" style="font-family:&quot;Liberation Sans&quot;;font-size:13px;fill:#000000;white-space:pre">?</text>
</svg>
<div class="a" style="left:0;top:0;width:1px;height:548px;background:#007541"></div>
<div class="a" style="left:902px;top:0;width:1px;height:548px;background:#007541"></div>
<div class="a" style="left:0;top:547px;width:903px;height:1px;background:#007541"></div>
</body></html>
